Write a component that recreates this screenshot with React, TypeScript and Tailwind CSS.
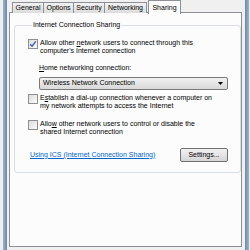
import React from "react";

/* ─── Tabs ─── */
const tabs = [
  { label: "General", w: "w-[32px]" },
  { label: "Options", w: "w-[31px]" },
  { label: "Security", w: "w-[32px]" },
  { label: "Networking", w: "w-[43px]" },
];

/* ─── Checkbox ─── */
function Check({ checked }: { checked?: boolean }) {
  return (
    <span className="mt-[0px] flex h-[10px] w-[10px] shrink-0 items-center justify-center border border-[#8f8f8f] bg-gradient-to-br from-[#dcdcdc] to-[#fbfbfb]">
      {checked && (
        <svg width="8" height="8" viewBox="0 0 8 8" fill="none">
          <path d="M1.2 4.2L3.1 6.2L6.8 1.3" stroke="#3c59a4" strokeWidth="1.4" />
        </svg>
      )}
    </span>
  );
}

function Row({
  checked,
  lines,
  className = "",
}: {
  checked?: boolean;
  lines: React.ReactNode[];
  className?: string;
}) {
  return (
    <div className={`flex items-start gap-[2px] ${className}`}>
      <Check checked={checked} />
      <div className="leading-[8px]">
        {lines.map((l, i) => (
          <div key={i} className="whitespace-nowrap">
            {l}
          </div>
        ))}
      </div>
    </div>
  );
}

export default function App() {
  return (
    <div
      className="flex h-[250px] w-[250px] overflow-hidden bg-[#eceef1] text-[7px] text-black"
      style={{ fontFamily: '"Liberation Sans", Arial, sans-serif' }}
    >
      {/* left frame */}
      <div className="ml-[3px] h-full w-[4px] bg-gradient-to-r from-[#9fb3c9] to-[#6f89a8]" />

      {/* dialog body */}
      <div className="flex h-full w-[236px] flex-col bg-[#f0f0f0]">
        {/* tab strip */}
        <div className="relative z-10 flex h-[13px] items-end pl-[5px]">
          {tabs.map((t) => (
            <div
              key={t.label}
              className={`flex h-[11px] ${t.w} items-center justify-center border border-b-0 border-[#8d9097] bg-gradient-to-b from-[#f2f2f2] to-[#dcdcdc] -mr-px`}
            >
              {t.label}
            </div>
          ))}
          <div className="ml-[2px] flex h-[14px] w-[33px] translate-y-px items-start justify-center border border-b-0 border-[#8d9097] bg-[#fcfcfc] pt-[2px]">
            Sharing
          </div>
        </div>

        {/* panel */}
        <div className="ml-[2px] mt-[-1px] h-[235px] w-[233px] border border-[#8d9097] bg-[#fcfcfc]">
          <fieldset className="ml-[4px] mt-[8px] w-[222px] rounded-[3px] border border-[#d5dfe5] pb-[10px] pl-[13px] pr-[12px] pt-[10px]">
            <legend className="ml-[4px] px-[1px] leading-[8px]">
              Internet Connection Sharing
            </legend>

            <Row
              checked
              lines={[
                <>
                  Allow other <u>n</u>etwork users to connect through this
                </>,
                "computer's Internet connection",
              ]}
            />

            <div className="ml-[11px] mt-[9px] leading-[8px]">
              <u>H</u>ome networking connection:
            </div>
            <div className="ml-[11px] mt-[5px] flex h-[13px] w-[189px] items-center justify-between rounded-[2px] border border-[#7a7a7a] bg-gradient-to-b from-[#f2f2f2] to-[#d9d9d9] pl-[3px] pr-[4px]">
              <span>Wireless Network Connection</span>
              <svg width="5" height="3" viewBox="0 0 5 3">
                <path d="M0 0H5L2.5 3Z" fill="#000" />
              </svg>
            </div>

            <Row
              className="mt-[4px]"
              lines={[
                <>
                  E<u>s</u>tablish a dial-up connection whenever a computer on
                </>,
                "my network attempts to access the Internet",
              ]}
            />

            <Row
              className="mt-[10px]"
              lines={[
                <>
                  Allo<u>w</u> other network users to control or disable the
                </>,
                "shared Internet connection",
              ]}
            />

            <div className="mt-[12px] flex h-[14px] items-center justify-between pl-[2px]">
              <span className="text-[#0066cc] underline">
                Using ICS (Internet Connection Sharing)
              </span>
              <button className="flex h-[14px] w-[48px] items-center justify-center rounded-[2px] border border-[#707070] bg-gradient-to-b from-[#f2f2f2] to-[#d6d6d6]">
                Settings...
              </button>
            </div>
          </fieldset>
        </div>
      </div>

      {/* right frame */}
      <div className="h-full w-[2px] bg-[#f0f0f0]" />
      <div className="h-full w-[4px] bg-gradient-to-r from-[#6f89a8] to-[#9fb3c9]" />
    </div>
  );
}
